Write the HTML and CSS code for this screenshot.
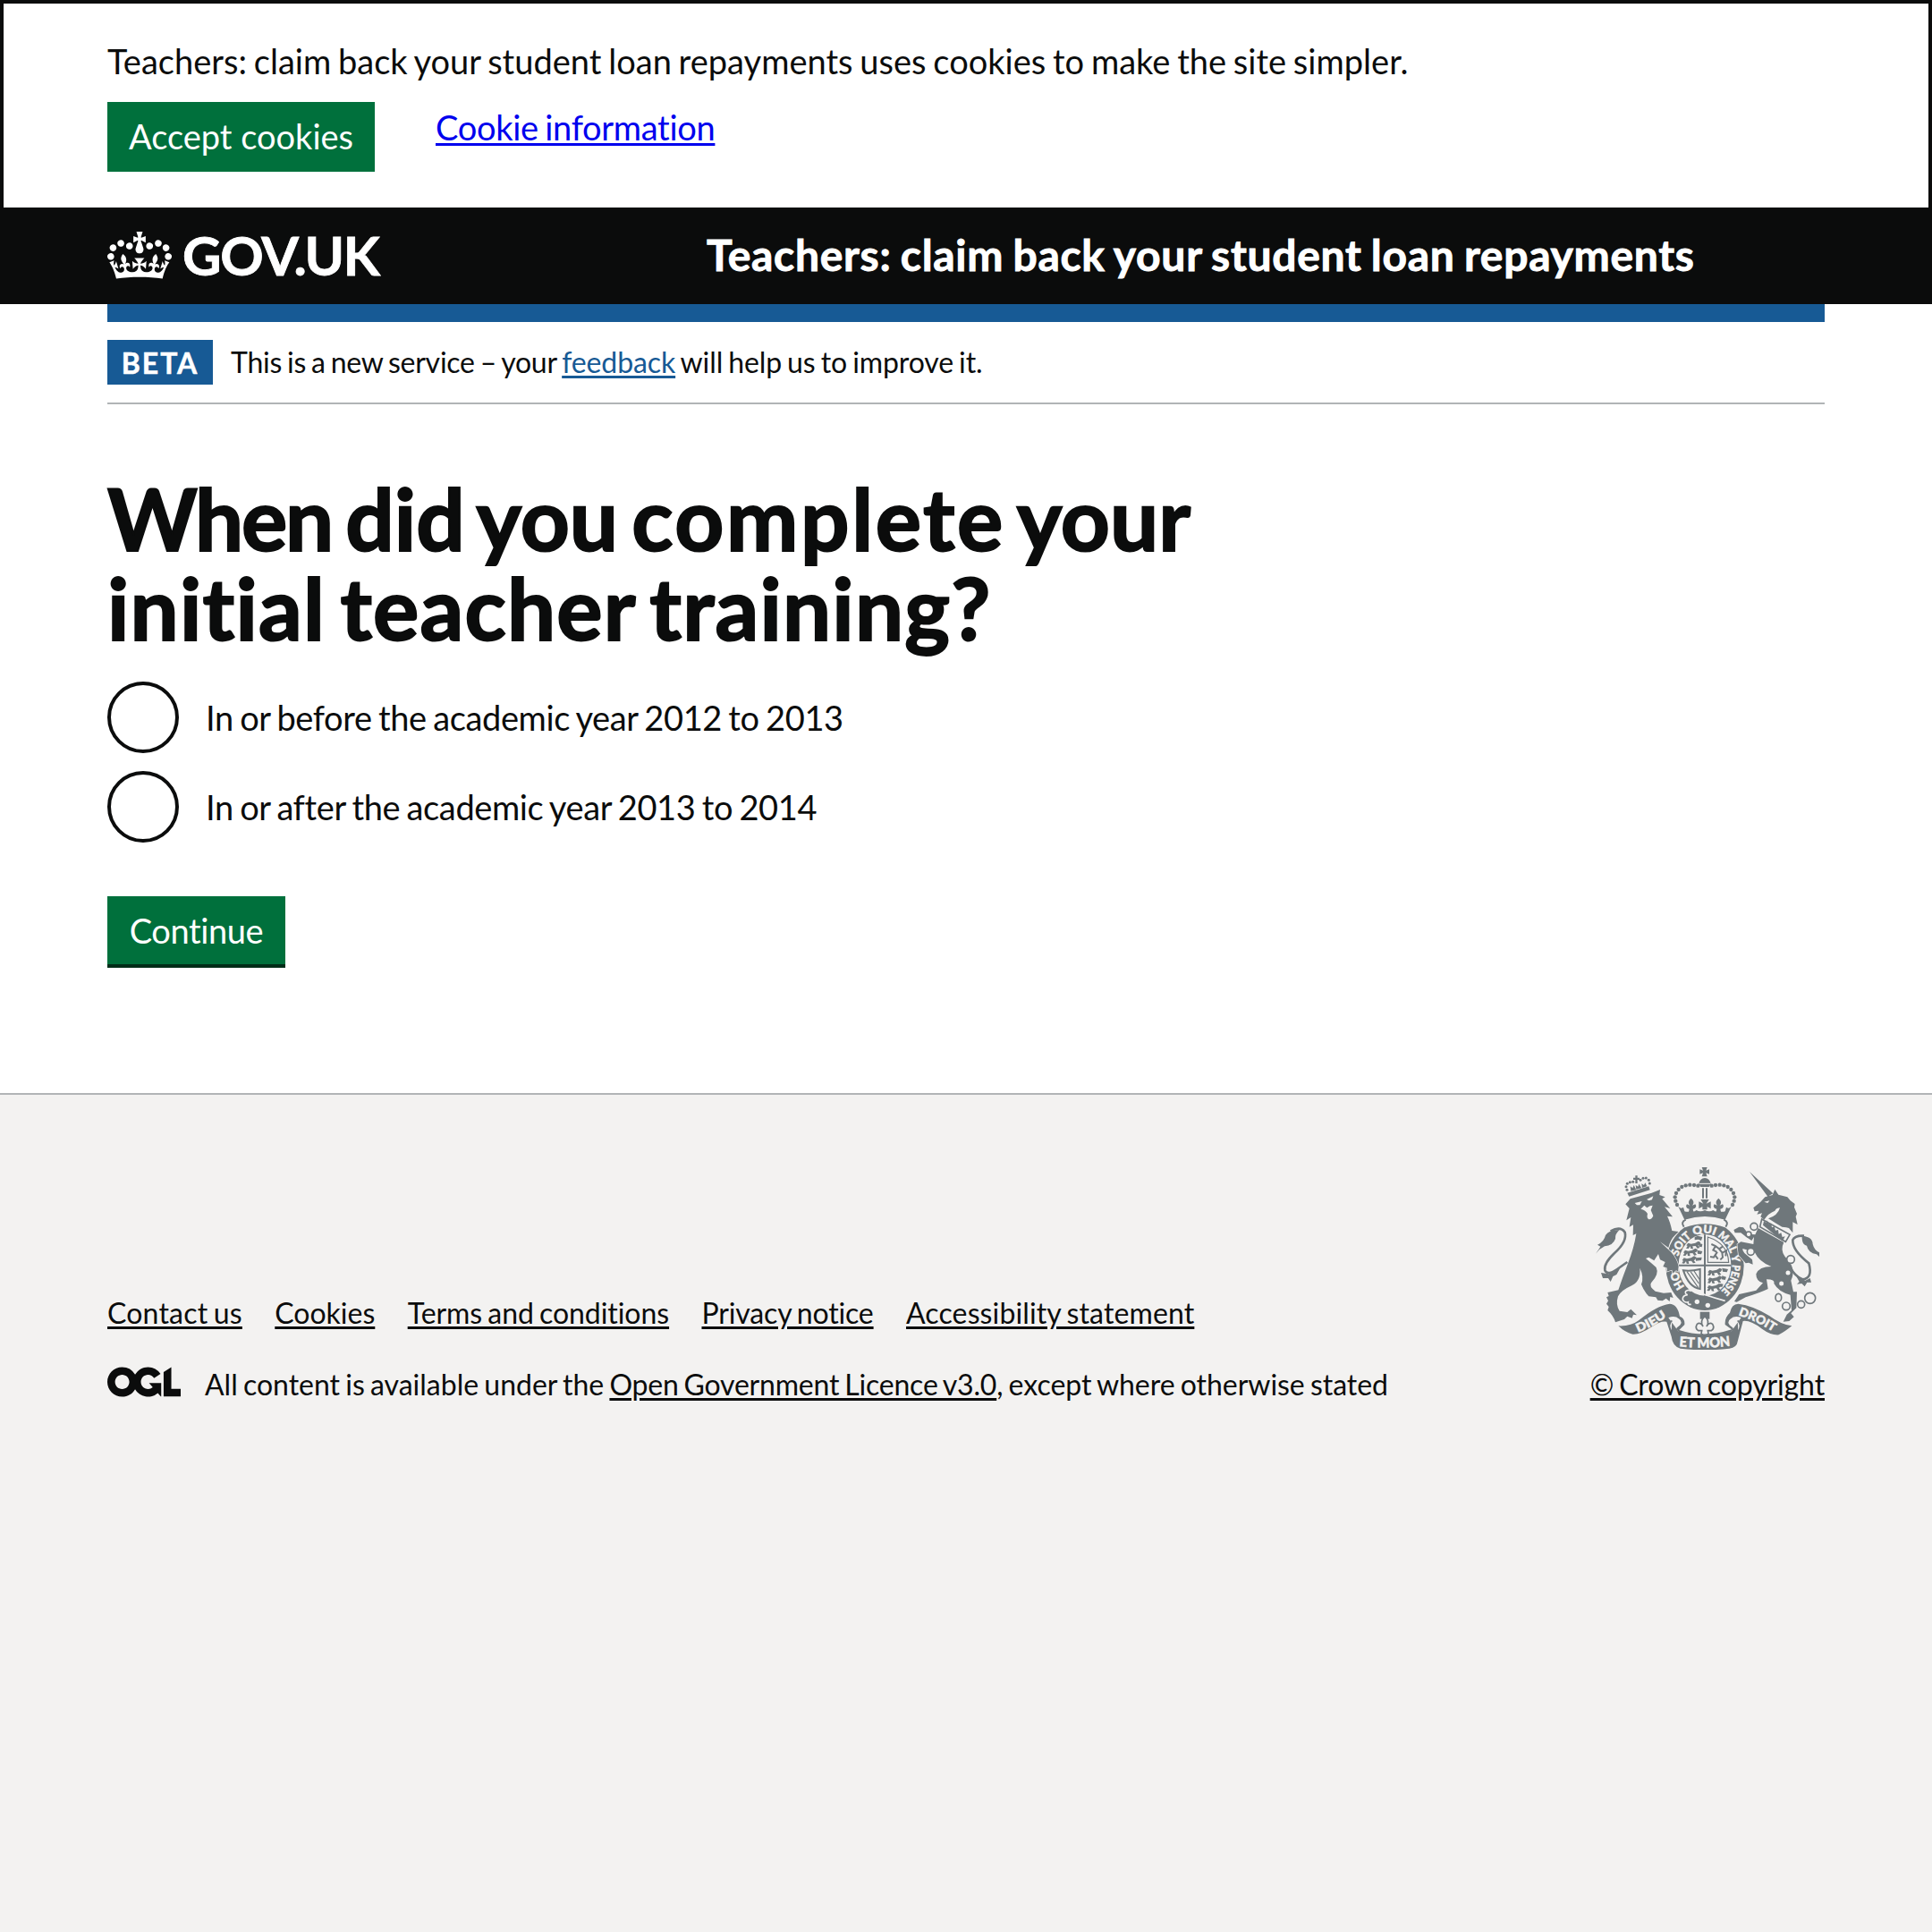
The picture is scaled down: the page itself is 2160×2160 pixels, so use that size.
FILE: index.html
```
<!DOCTYPE html>
<html lang="en">
<head>
<meta charset="utf-8">
<title>When did you complete your initial teacher training?</title>
<link rel="stylesheet" href="styles.css">
</head>
<body>
<section class="cookie-banner">
  <p class="cookie-banner__message">Teachers: claim back your student loan repayments uses cookies to make the site simpler.</p>
  <div class="cookie-banner__actions">
    <button class="button button--flat" type="button">Accept cookies</button>
    <a class="cookie-banner__link" href="#">Cookie information</a>
  </div>
</section>

<header class="header">
  <a class="header__logo" href="#">
    <svg class="header__crown" viewBox="0 0 132 97" aria-hidden="true"><path fill="currentColor" fill-rule="evenodd" d="M25 30.2c3.5 1.5 7.7-.2 9.1-3.7 1.5-3.6-.2-7.8-3.9-9.2-3.6-1.4-7.6.3-9.1 3.9-1.4 3.5.3 7.5 3.9 9zM9 39.5c3.6 1.5 7.8-.2 9.2-3.7 1.5-3.6-.2-7.8-3.9-9.1-3.6-1.5-7.6.2-9.1 3.8-1.4 3.5.3 7.5 3.8 9zM4.4 57.2c3.5 1.5 7.7-.2 9.1-3.8 1.5-3.6-.2-7.7-3.9-9.1-3.5-1.5-7.6.3-9.1 3.8-1.4 3.5.3 7.6 3.9 9.1zm38.3-21.4c3.5 1.5 7.7-.2 9.1-3.8 1.5-3.6-.2-7.7-3.9-9.1-3.6-1.5-7.6.3-9.1 3.8-1.3 3.6.4 7.7 3.9 9.1zm64.4-5.6c-3.6 1.5-7.8-.2-9.1-3.7-1.5-3.6.2-7.8 3.8-9.2 3.6-1.4 7.7.3 9.2 3.9 1.3 3.5-.4 7.5-3.9 9zm15.9 9.3c-3.6 1.5-7.7-.2-9.1-3.7-1.5-3.6.2-7.8 3.7-9.1 3.6-1.5 7.7.2 9.2 3.8 1.5 3.5-.3 7.5-3.8 9zm4.7 17.7c-3.6 1.5-7.8-.2-9.2-3.8-1.5-3.6.2-7.7 3.9-9.1 3.6-1.5 7.7.3 9.2 3.8 1.3 3.5-.4 7.6-3.9 9.1zM89.3 35.8c-3.6 1.5-7.8-.2-9.2-3.8-1.4-3.6.2-7.7 3.9-9.1 3.6-1.5 7.7.3 9.2 3.8 1.4 3.6-.3 7.7-3.9 9.1zM69.7 17.7l8.9 4.7V9.3l-8.9 2.8c-.2-.3-.5-.6-.9-.9L72.4 0H59.6l3.5 11.2c-.3.3-.6.5-.9.9l-8.8-2.8v13.1l8.8-4.7c.3.3.6.7.9.9l-5 15.4v.1c-.2.8-.4 1.6-.4 2.4 0 4.1 3.1 7.5 7 8.1h.2c.3 0 .7.1 1 .1.4 0 .7 0 1-.1h.2c4-.6 7.1-4.1 7.1-8.1 0-.8-.1-1.7-.4-2.4V34l-5.1-15.4c.4-.2.7-.6 1-.9zM66 92.8c16.9 0 32.8 1.1 47.1 3.2 4-16.9 8.9-26.7 14-33.5l-9.6-3.4c1 4.9 1.1 7.2 0 10.2-1.5-1.4-3-4.3-4.2-8.7L108.6 76c2.8-2 5-3.2 7.5-3.3-4.4 9.4-10 11.9-13.6 11.2-4.3-.8-6.3-4.6-5.6-7.9 1-4.7 5.7-5.9 8-.5 4.3-8.7-3-11.4-7.6-8.8 7.1-7.2 7.9-13.5 2.1-21.1-8 6.1-8.1 12.3-4.5 20.8-4.7-5.4-12.1-2.5-9.5 6.2 3.4-5.2 7.9-2 7.2 3.1-.6 4.3-6.4 7.8-13.5 7.2-10.3-.9-10.9-8-11.2-13.8 2.5-.5 7.1 1.8 11 7.3L80.2 60c-4.1 4.4-8 5.3-12.3 5.4 1.4-4.4 8-11.6 8-11.6H55.5s6.4 7.2 7.9 11.6c-4.2-.1-8-1-12.3-5.4l1.4 16.4c3.9-5.5 8.5-7.7 10.9-7.3-.3 5.8-.9 12.8-11.1 13.8-7.2.6-12.9-2.9-13.5-7.2-.7-5 3.8-8.3 7.1-3.1 2.7-8.7-4.6-11.6-9.4-6.2 3.7-8.5 3.6-14.7-4.6-20.8-5.8 7.6-5 13.9 2.2 21.1-4.7-2.6-11.9.1-7.7 8.8 2.3-5.5 7.1-4.2 8.1.5.7 3.3-1.3 7.1-5.7 7.9-3.5.7-9-1.8-13.5-11.2 2.5.1 4.7 1.3 7.5 3.3l-4.7-15.4c-1.2 4.4-2.7 7.2-4.3 8.7-1.1-3-.9-5.3 0-10.2l-9.5 3.4c5 6.9 9.9 16.7 14 33.5 14.8-2.1 30.8-3.2 47.7-3.2z"/></svg>
    <span class="header__logotype">GOV.UK</span>
  </a>
  <a class="header__service" href="#">Teachers: claim back your student loan repayments</a>
</header>

<div class="container">
  <div class="blue-bar"></div>
  <div class="phase-banner">
    <strong class="tag">BETA</strong>
    <span class="phase-banner__text"><span class="phase-banner__lead">This is a new service – your </span><a class="link" href="#">feedback</a> will help us to improve it.</span>
  </div>
  <main class="main">
    <h1 class="heading"><span class="heading__line"><span class="heading__word--tight">When</span> did you <span class="heading__word--wide">complete</span> your</span> <span class="heading__line heading__line--second">initial teacher training?</span></h1>
    <div class="radios">
      <label class="radio"><input class="radio__input" type="radio" name="year"><span class="radio__label">In or before the academic year 2012 to 2013</span></label>
      <label class="radio"><input class="radio__input" type="radio" name="year"><span class="radio__label">In or after the academic year 2013 to 2014</span></label>
    </div>
    <button class="button button--continue" type="submit">Continue</button>
  </main>
</div>

<footer class="footer">
  <div class="footer__meta">
    <nav class="footer__links">
      <a class="footer__link footer__link--contact" href="#">Contact us</a>
      <a class="footer__link" href="#">Cookies</a>
      <a class="footer__link footer__link--terms" href="#">Terms and conditions</a>
      <a class="footer__link footer__link--privacy" href="#">Privacy notice</a>
      <a class="footer__link footer__link--access" href="#">Accessibility statement</a>
    </nav>
    <div class="footer__licence">
      <svg class="footer__ogl" viewBox="0 0 483.2 195.7" aria-hidden="true"><path fill="currentColor" d="M421.5 142.8V.1l-50.7 32.3v161.1h112.4v-50.7zm-122.3-9.6A47.12 47.12 0 0 1 221 97.8c0-26 21.1-47.1 47.1-47.1 16.7 0 31.4 8.7 39.7 21.8l42.7-27.2A97.63 97.63 0 0 0 268.1 0c-36.5 0-68.3 20.1-85.1 49.7A98 98 0 0 0 97.8 0C43.9 0 0 43.9 0 97.8s43.9 97.8 97.8 97.8c36.5 0 68.3-20.1 85.1-49.7a97.76 97.76 0 0 0 149.6 25.4l19.4 22.2h3v-87.8h-80l24.3 27.5zM97.8 145c-26 0-47.1-21.1-47.1-47.1s21.1-47.1 47.1-47.1 47.1 21.1 47.1 47.1S123.8 145 97.8 145"/></svg>
      <span>All content is available under the <a class="footer__link footer__link--ogl" href="#">Open Government Licence v3.0</a><span class="footer__tail">, except where otherwise stated</span></span>
    </div>
  </div>
  <div class="footer__crest">
    <svg class="crest" viewBox="72 72 750 612" aria-hidden="true">
      <defs>
        <path id="garter" d="M438 507A92 107 0 0 1 438 293A92 107 0 0 1 438 507"/>
        <path id="dieu" d="M214 626Q262 608 318 568"/>
        <path id="mon" d="M352 673Q438 681 524 671"/>
        <path id="droit" d="M550 568Q612 588 670 626"/>
        <g id="walking-lion"><path d="M0 12l6-8 10 3 14-3 10-6 8 4-4 8-5 2 6 8-8 2-6-8-10 1 2 9-8-1-2-8-6 8-8-1 5-8z"/></g>
        <g id="fleur"><path d="M0-22q14 12 4 24l10-4q6 8-2 14l-6 2 2 10H-8l2-10-6-2q-8-6-2-14l10 4q-10-12 4-24z"/></g>
        <g id="pearls"><circle cx="115" cy="74" r="6.5"/><circle cx="102" cy="72" r="6.5"/><circle cx="88" cy="71" r="6.5"/><circle cx="74" cy="73" r="6.5"/><circle cx="61" cy="78" r="6.5"/><circle cx="50" cy="87" r="6.5"/><circle cx="42" cy="99" r="6.5"/><circle cx="38" cy="112" r="6.5"/><circle cx="40" cy="125" r="6.5"/><circle cx="45" cy="138" r="6.5"/></g>
      </defs>

      <!-- garter, shield and crown -->
      <g transform="translate(300 60)">
        <ellipse cx="138" cy="342" rx="131" ry="150"/>
        <path class="crest__paper" d="M62 196Q72 186 138 178Q204 186 214 196L206 214Q138 190 72 214Z"/>
        <path class="crest__line" d="M74 188Q56 196 68 212M202 188Q220 196 208 212"/>
        <ellipse class="crest__paper" cx="138" cy="340" rx="88" ry="103"/>
        <path class="crest__line" d="M138 238V443M50 341H226"/>
        <g><use href="#walking-lion" x="76" y="262"/><use href="#walking-lion" x="66" y="286"/><use href="#walking-lion" x="62" y="312"/><path d="M104 246l10-4 16 4-4 12-10-4-12 2zM118 266l12 4-2 10-10-2zM112 290l18 4-4 10-12-2zM108 316l20-2-2 10-18 2z"/></g>
        <g><use href="#walking-lion" x="148" y="352"/><use href="#walking-lion" x="148" y="378"/><use href="#walking-lion" x="146" y="404"/><path d="M196 350l20 4-4 10-14-2zM196 376l14 4-4 10-12-2zM190 402l10 2-4 10-8-2z"/></g>
        <path class="crest__line crest__line--thin" d="M148 246V331H218Q216 268 148 246Z"/>
        <path class="crest__figure" d="M160 270l14 6 12 10 10 12 2 16-8 8M174 276l-8 14 12 6M186 286l12-8M180 296l-12 18-12-2M172 306l10 14M198 298l12-6-2 18"/>
        <path class="crest__line" d="M66 358Q90 362 122 354V420Q84 414 66 358Z"/>
        <path class="crest__line crest__line--thin" d="M78 362L116 416M90 362L118 402M102 360L120 388"/>
        <path class="crest__cut" d="M84 418Q130 440 206 460"/>
        <path class="crest__gap" d="M92 428Q84 420 74 428Q70 436 80 440Q62 442 64 456Q70 468 82 464Q80 474 92 472"/>
        <circle class="crest__paper" cx="112" cy="463" r="8"/><circle class="crest__paper" cx="148" cy="475" r="8"/>
        <path d="M128 12h18l-4 11 11-4v16l-11-4 4 12h-18l4-12-11 4V19l11 4zM118 68q4-20 20-20t20 20l-6 10h-28zM129 82h6v34h-6zM141 82h6v34h-6zM124 120h28l-9 14 15-7v24l-12-7v10h-16v-10l-12 7v-24l15 7z"/>
        <path class="crest__cut crest__cut--thin" d="M120 67H156"/>
        <use href="#pearls"/><use href="#pearls" transform="translate(276 0) scale(-1 1)"/>
        <use href="#fleur" x="92" y="138"/><use href="#fleur" x="184" y="138"/>
        <path d="M48 142q8 12 18 4l4 14q12 4 18-2 12 6 22-2 12 8 28 0 16 8 28 0 10 8 22 2 6 6 18 2l4-14q10 8 18-4l-22 46q-68-22-136 0z"/>
        <path d="M122 497h32v24h-32z"/>
        <path class="crest__line crest__fleur" d="M138 512q18 16 6 34 8-16 20-8 8 14-4 22h-12l2 10-12 10-12-10 2-10h-12q-12-8-4-22 12-8 20 8-12-18 6-34z"/>
      </g>
      <g class="crest__motto">
        <text><textPath href="#garter" startOffset="78" textLength="58" lengthAdjust="spacingAndGlyphs">HO</textPath></text>
        <text><textPath href="#garter" startOffset="185" textLength="80" lengthAdjust="spacingAndGlyphs">SOIT</textPath></text>
        <text><textPath href="#garter" startOffset="275" textLength="72" lengthAdjust="spacingAndGlyphs">QUI</textPath></text>
        <text><textPath href="#garter" startOffset="357" textLength="72" lengthAdjust="spacingAndGlyphs">MAL</textPath></text>
        <text><textPath href="#garter" startOffset="436">Y</textPath></text>
        <text><textPath href="#garter" startOffset="468" textLength="98" lengthAdjust="spacingAndGlyphs">PENSE</textPath></text>
      </g>

      <!-- lion -->
      <g transform="translate(60 60)">
        <path class="crest__edge" d="M112 136L128 118L200 98L228 87L226 105L245 112L235 118L262 150L243 145L270 178L252 176Q262 195 268 225L290 228L278 240Q262 255 256 282L228 262L266 298Q285 320 290 345L288 362L282 358 270 368 268 356 250 362 252 350 238 345 245 330 228 322 222 303 208 325 190 314 180 318Q195 330 215 348Q226 370 198 400Q190 412 212 428L240 434 265 432 272 450 262 447 260 462 248 452 236 460 220 458 214 448 190 445 182 436 172 420 165 405Q175 380 160 350Q165 395 130 410Q96 425 87 445Q78 474 92 494L118 498 130 488 150 508 138 506 134 518 118 512 108 522 78 532Q72 510 52 492L56 480 48 470 54 460 48 448 56 444 52 432 88 424Q96 400 105 375L120 335Q140 285 148 235L137 240L138 205L125 212L130 180L115 190L125 150Z"/>
        <path class="crest__rope" d="M62 226Q95 208 110 230Q118 262 75 300Q38 335 43 358Q52 376 84 354L118 330"/>
        <path d="M12 302Q22 288 28 278L18 272Q40 262 45 240Q55 222 92 222Q76 236 78 252Q70 275 42 277Q25 285 12 302ZM30 366L56 370 94 350 82 372 70 378 62 396 54 384 36 384Z"/>
        <path class="crest__paper" d="M143 132L167 126L160 139L150 139ZM183 120L205 109L201 121L191 124ZM163 152L175 140L184 148 194 142 203 140L197 156L205 175Q200 188 190 187Q182 182 186 168Q180 156 163 152Z"/>
        <path d="M118 98L190 76L194 88L124 110ZM145 40h7v7h7v7h-7v12h-7V54h-7v-7h7zM130 92l-2-16 8 6 4-10 8 16zM148 86l-2-14 8 5 3-9 9 14zM168 81l-2-14 8 5 4-8 6 12z"/>
        <g><circle cx="117" cy="88" r="4.5"/><circle cx="114" cy="77" r="4.5"/><circle cx="118" cy="67" r="4.5"/><circle cx="127" cy="62" r="4.5"/><circle cx="137" cy="61" r="4.5"/><circle cx="162" cy="55" r="4.5"/><circle cx="171" cy="49" r="4.5"/><circle cx="181" cy="48" r="4.5"/><circle cx="190" cy="55" r="4.5"/><circle cx="193" cy="66" r="4.5"/></g>
      </g>

      <!-- unicorn -->
      <g transform="translate(525 60)">
        <path class="crest__edge" d="M92 216L178 264Q165 290 182 312Q222 350 202 392L210 430H222L220 484L202 502 212 514 196 528 176 530 188 506 204 492 200 440Q160 430 145 402Q150 388 120 388L125 420Q100 432 50 448L20 464L12 462L28 438L85 425L108 400Q85 395 85 370Q95 345 136 345Q94 328 80 296L40 285Q38 292 46 300L72 322 74 338 60 332 50 334 26 306 22 270 34 262 76 270 78 246 70 258 52 246 34 232 14 232 10 222 28 212 42 214 60 236 82 238Z"/>
        <path d="M63 27L142 100L124 110ZM76 148L100 128L115 112L140 105L148 86L160 104L190 112L200 124 215 135L213 146 222 168L218 178 224 204L208 196L208 232L195 216 186 214 172 212 152 200L126 184Q158 174 165 148Q154 148 148 158Q126 166 112 188L100 178L105 166L88 170L94 158 80 160Z"/>
        <path class="crest__paper" d="M112 128l18-4-6 8z"/>
        <path class="crest__line crest__fleur" d="M104 186L198 238L184 262L98 212Z"/>
        <path d="M108 206l3-14 8 6 3-8 5 12 9-2 2 14 8-4 4 14 9-2 2 14 8-4 4 14 9-2-8 16z"/>
        <path class="crest__rope" d="M200 348Q214 376 240 388Q276 386 262 334Q206 290 208 256Q214 240 246 242"/>
        <path d="M238 242Q275 245 275 270Q280 290 297 298V312L288 304Q260 300 255 275Q242 272 240 258ZM220 378L250 392 266 384 270 398 256 398 248 412 238 402 222 404 230 396Z"/>
        <g class="crest__roundels"><circle cx="78" cy="211" r="12"/><circle cx="60" cy="237" r="9"/><circle cx="67" cy="295" r="12"/><circle cx="201" cy="321" r="13"/><circle cx="192" cy="366" r="10"/><circle cx="170" cy="402" r="10"/><ellipse cx="160" cy="449" rx="10" ry="13"/><circle cx="186" cy="478" r="13"/><circle cx="236" cy="472" r="12"/><circle cx="266" cy="451" r="18"/></g>
      </g>

      <!-- ribbon -->
      <path d="M148 604Q190 606 216 586Q276 536 320 530Q346 530 354 572Q372 578 370 600L352 618Q438 646 528 616L506 600Q504 576 522 560Q528 530 550 530Q600 536 654 570Q694 600 730 604Q706 624 686 634Q660 636 630 614Q590 584 566 588L548 656Q546 676 520 680Q438 690 356 680Q330 674 326 640L310 590Q290 586 262 606Q220 634 196 632Q170 626 148 604Z"/>
      <path class="crest__curl" d="M314 574Q340 566 352 578Q374 592 346 612Q340 620 352 626M326 622Q312 600 328 586M562 574Q536 566 524 578Q502 592 530 612Q536 620 524 626M550 622Q564 600 548 586"/>
      <g class="crest__motto crest__motto--ribbon">
        <text><textPath href="#dieu" textLength="110" lengthAdjust="spacingAndGlyphs">DIEU</textPath></text>
        <text class="crest__mon"><textPath href="#mon" textLength="172" lengthAdjust="spacingAndGlyphs">ET MON</textPath></text>
        <text><textPath href="#droit" textLength="130" lengthAdjust="spacingAndGlyphs">DROIT</textPath></text>
      </g>
    </svg>
    <a class="footer__link footer__link--crown" href="#">© Crown copyright</a>
  </div>
</footer>
</body>
</html>
```
FILE: styles.css
```
* { box-sizing: border-box; }

html { background: #f3f2f1; }

body {
  margin: 0;
  background: #fff;
  color: #0b0c0c;
  font-family: Lato, "Noto Sans", sans-serif;
  font-size: 38px;
  font-variant-ligatures: none;
  line-height: 50px;
  word-spacing: -2px;
}

a {
  text-decoration-thickness: 3px;
  text-underline-offset: 3px;
}

.cookie-banner {
  height: 232px;
  padding: 39px 116px 0;
  border: 4px solid #0b0c0c;
  border-bottom: 0;
}

.cookie-banner__message {
  margin: 0 0 21px;
  letter-spacing: 0.02px;
}

.cookie-banner__actions {
  display: flex;
  align-items: flex-start;
  gap: 68px;
}

.cookie-banner__link {
  margin-top: 3px;
  color: #00e;
  letter-spacing: -0.3px;
}

.button {
  display: block;
  padding: 19px 0 21px;
  border: 0;
  border-radius: 0;
  background: #00703c;
  color: #fff;
  font: inherit;
  line-height: 38px;
  text-align: center;
}

.button--flat { width: 299px; word-spacing: 0; }

.button--continue {
  width: 199px;
  height: 76px;
  margin-top: 60px;
  padding-bottom: 19px;
  box-shadow: 0 4px 0 #002d18;
  letter-spacing: -0.4px;
}

.header {
  display: flex;
  height: 108px;
  padding: 23px 120px 0;
  background: #0b0c0c;
  line-height: 60px;
}

.header a { color: #fff; text-decoration: none; }

.header__logo {
  display: flex;
  width: 670px;
}

.header__crown {
  width: 72px;
  height: 53px;
  margin: 4px 12px 0 0;
}

.header__logotype {
  font-size: 60px;
  font-weight: 700;
  letter-spacing: -1.2px;
  -webkit-text-stroke: 0.8px currentColor;
}

.header__service {
  font-size: 48px;
  font-weight: 700;
  letter-spacing: 0.7px;
  -webkit-text-stroke: 0.9px currentColor;
}

.container { margin: 0 120px; }

.blue-bar {
  height: 20px;
  background: #175a95;
}

.phase-banner {
  display: flex;
  gap: 20px;
  height: 92px;
  padding-top: 20px;
  border-bottom: 2px solid #b1b4b6;
  font-size: 32px;
}

.tag {
  width: 118px;
  height: 50px;
  background: #175a95;
  color: #fff;
  font-weight: 700;
  letter-spacing: 2px;
  line-height: 51px;
  text-align: center;
  -webkit-text-stroke: 0.5px currentColor;
}

.phase-banner__text { letter-spacing: -0.1px; }

.phase-banner__lead { letter-spacing: -0.24px; }

.link { color: #175a95; }

.main { padding-top: 77px; }

.heading {
  margin: 0;
  font-size: 96px;
  font-weight: 700;
  line-height: 100px;
  word-spacing: -8px;
  -webkit-text-stroke: 2px currentColor;
}

.heading__line { display: block; }

.heading__line--second { letter-spacing: 1.2px; }

.heading__word--tight { letter-spacing: -2.2px; }

.heading__word--wide { letter-spacing: 2.6px; }

.radios {
  display: grid;
  gap: 20px;
  margin-top: 33px;
}

.radio {
  display: flex;
  gap: 30px;
  letter-spacing: -0.37px;
}

.radio__input {
  flex: none;
  width: 80px;
  height: 80px;
  margin: 0;
  border: 4px solid #0b0c0c;
  border-radius: 50%;
  appearance: none;
}

.radio__label { padding-top: 15px; }

.footer {
  display: flex;
  justify-content: space-between;
  align-items: flex-end;
  height: 346px;
  margin-top: 144px;
  padding: 0 120px;
  border-top: 2px solid #b1b4b6;
  background: #f3f2f1;
  font-size: 32px;
  line-height: 40px;
}

.footer__links {
  display: flex;
  gap: 36.4px;
  margin-bottom: 40px;
}

.footer__link { color: #0b0c0c; }
.footer__link--contact { letter-spacing: 0.2px; }
.footer__link--terms { letter-spacing: -0.05px; }
.footer__link--privacy { letter-spacing: -0.15px; }
.footer__link--access { letter-spacing: 0.13px; }
.footer__link--ogl { letter-spacing: -0.2px; }
.footer__link--crown { letter-spacing: -0.12px; }
.footer__tail { letter-spacing: -0.03px; }

.footer__licence {
  display: flex;
  gap: 27px;
}

.footer__ogl {
  width: 82px;
  height: 34px;
}

.footer__crest {
  display: flex;
  flex-direction: column;
  align-items: flex-end;
}

.crest {
  width: 250px;
  height: 204px;
  margin: 0 6px 19px 0;
  fill: #6f777b;
}

.crest__paper { fill: #f3f2f1; }
.crest__edge { stroke: #f3f2f1; stroke-width: 4; paint-order: stroke; }
.crest__line { fill: none; stroke: #6f777b; stroke-width: 6; }
.crest__line--thin { stroke-width: 3.5; }
.crest__figure { fill: none; stroke: #6f777b; stroke-width: 6; }
.crest__fleur { fill: #f3f2f1; stroke-width: 5; }
.crest__rope { fill: none; stroke: #6f777b; stroke-width: 8; }
.crest__cut { fill: none; stroke: #f3f2f1; stroke-width: 5; }
.crest__cut--thin { stroke-width: 3; }
.crest__gap { fill: #6f777b; stroke: #f3f2f1; stroke-width: 5; }
.crest__curl { fill: #f3f2f1; stroke: #6f777b; stroke-width: 5; }
.crest__roundels { fill: #f3f2f1; stroke: #6f777b; stroke-width: 5; }

.crest__motto {
  fill: #f3f2f1;
  stroke: #f3f2f1;
  stroke-width: 1.5;
  font-family: Lato, sans-serif;
  font-size: 37px;
  font-weight: 900;
  word-spacing: 0;
}

.crest__motto--ribbon { font-size: 40px; }
.crest__mon { font-size: 46px; }
```
